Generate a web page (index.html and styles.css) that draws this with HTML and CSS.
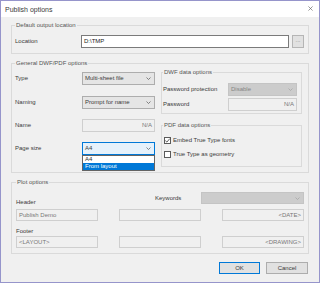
FILE: index.html
```html
<!DOCTYPE html>
<html>
<head>
  <meta charset="utf-8">
  <meta name="viewport" content="width=device-width">
  <title>Publish options</title>
<link rel="stylesheet" href="styles.css">
</head>
<body>
  <div class="window">
    <div class="titlebar">
      <span class="title">Publish options</span>
      <svg class="close" viewBox="0 0 6 6"><path d="M0.5 0.5 L5.5 5.5 M5.5 0.5 L0.5 5.5"/></svg>
    </div>

    <div class="content">
      <fieldset class="group g-output">
        <legend>Default output location</legend>
        <div class="row">
          <label class="lbl lbl-loc">Location</label>
          <div class="field path">D:\TMP</div>
          <div class="browse">...</div>
        </div>
      </fieldset>

      <fieldset class="group g-general">
        <legend>General DWF/PDF options</legend>
        <div class="general-cols">
          <div class="col-left">
            <div class="row r-type">
              <label class="lbl lbl-gen">Type</label>
              <div class="combo"><span>Multi-sheet file</span><svg class="chev" viewBox="0 0 5 3"><path d="M0.5 0.5 L2.5 2.5 L4.5 0.5"/></svg></div>
            </div>
            <div class="row r-naming">
              <label class="lbl lbl-gen">Naming</label>
              <div class="combo"><span>Prompt for name</span><svg class="chev" viewBox="0 0 5 3"><path d="M0.5 0.5 L2.5 2.5 L4.5 0.5"/></svg></div>
            </div>
            <div class="row r-name">
              <label class="lbl lbl-gen">Name</label>
              <div class="field readonly right gen-field">N/A</div>
            </div>
            <div class="row r-page">
              <label class="lbl lbl-gen">Page size</label>
              <div class="combo focused">
                <span>A4</span><svg class="chev" viewBox="0 0 5 3"><path d="M0.5 0.5 L2.5 2.5 L4.5 0.5"/></svg>
                <ul class="droplist">
                  <li>A4</li>
                  <li class="selected">From layout</li>
                </ul>
              </div>
            </div>
          </div>

          <div class="col-right">
            <fieldset class="group sub dwf">
              <legend>DWF data options</legend>
              <div class="row">
                <label class="lbl lbl-dwf">Password protection</label>
                <div class="combo disabled dwf-field"><span>Disable</span><svg class="chev" viewBox="0 0 5 3"><path d="M0.5 0.5 L2.5 2.5 L4.5 0.5"/></svg></div>
              </div>
              <div class="row r-pass">
                <label class="lbl lbl-dwf">Password</label>
                <div class="field readonly right dwf-field">N/A</div>
              </div>
            </fieldset>

            <fieldset class="group sub pdf">
              <legend>PDF data options</legend>
              <div class="check-row">
                <span class="checkbox"><svg viewBox="0 0 7 7"><path d="M1.3 3.6 L2.9 5.1 L5.8 1.6"/></svg></span>
                <span>Embed True Type fonts</span>
              </div>
              <div class="check-row r-geom">
                <span class="checkbox"></span>
                <span>True Type as geometry</span>
              </div>
            </fieldset>
          </div>
        </div>
      </fieldset>

      <fieldset class="group g-plot">
        <legend>Plot options</legend>
        <div class="plot-head">
          <label class="lbl plot-lbl">Header</label>
          <label class="lbl kw-lbl">Keywords</label>
          <div class="combo disabled kw-combo"><span></span><svg class="chev" viewBox="0 0 5 3"><path d="M0.5 0.5 L2.5 2.5 L4.5 0.5"/></svg></div>
        </div>
        <div class="plot-row r-header">
          <div class="field readonly">Publish Demo</div>
          <div class="field readonly"></div>
          <div class="field readonly right">&lt;DATE&gt;</div>
        </div>
        <label class="lbl plot-lbl footer-lbl">Footer</label>
        <div class="plot-row r-footer">
          <div class="field readonly">&lt;LAYOUT&gt;</div>
          <div class="field readonly"></div>
          <div class="field readonly right">&lt;DRAWING&gt;</div>
        </div>
      </fieldset>

      <div class="buttons">
        <div class="button default">OK</div>
        <div class="button cancel">Cancel</div>
      </div>
    </div>
  </div>
</body>
</html>
```

FILE: styles.css
```css
* {
  box-sizing: border-box;
}

body {
  margin: 0;
  background: #ffffff;
  font-family: "Liberation Sans", Arial, sans-serif;
  font-size: 6px;
  line-height: 7px;
  color: #3a3a3a;
}

.window {
  width: 320px;
  height: 283px;
  border: 1px solid #9695cb;
  background: #f0f0f0;
  overflow: hidden;
}

.titlebar {
  height: 16px;
  background: #ffffff;
  display: flex;
  align-items: center;
  justify-content: space-between;
  padding: 0 6px 0 4px;
}

.title {
  font-size: 7px;
  color: #3a3a3a;
}

.close {
  width: 5px;
  height: 5px;
  margin-top: -2px;
  stroke: #666666;
  stroke-width: 0.8;
  fill: none;
}

.content {
  padding: 0 10px;
}

/* group boxes */
fieldset.group {
  margin: 0;
  min-width: 0;
  border: 1px solid #dadada;
}

legend {
  padding: 0 1px;
  line-height: 7px;
  color: #555555;
}

.row {
  display: flex;
  align-items: center;
  height: 13px;
}

.lbl {
  color: #3a3a3a;
  white-space: nowrap;
}

/* generic edit box */
.field {
  height: 13px;
  border: 1px solid #7a7a7a;
  background: #ffffff;
  padding: 0 2px;
  line-height: 11px;
  white-space: nowrap;
  overflow: hidden;
}

.field.readonly {
  border-color: #cfcfcf;
  background: #f0f0f0;
  color: #777777;
}

.field.right {
  text-align: right;
}

/* combo box */
.combo {
  position: relative;
  height: 13px;
  width: 73px;
  display: flex;
  align-items: center;
  justify-content: space-between;
  padding: 0 3px 0 2px;
  border: 1px solid #adadad;
  background: #e5e5e5;
  white-space: nowrap;
}

.chev {
  width: 5px;
  height: 3px;
  fill: none;
  stroke: #555555;
  stroke-width: 0.7;
}

.combo.focused {
  border-color: #0078d7;
  background: #e5f1fb;
}

.combo.disabled {
  border-color: #c4c4c4;
  background: #cccccc;
  color: #858585;
}

.combo.disabled .chev {
  stroke: #a0a0a0;
}

.droplist {
  position: absolute;
  top: 12px;
  left: -1px;
  width: 73px;
  margin: 0;
  padding: 0;
  list-style: none;
  border: 1px solid #646464;
  background: #ffffff;
  color: #333333;
}

.droplist li {
  height: 7px;
  line-height: 7px;
  padding-left: 2px;
}

.droplist li.selected {
  background: #0078d7;
  color: #ffffff;
}

/* default output location */
.g-output {
  margin-top: 5px !important;
  padding: 6px 4px 5px 3px;
}

.lbl-loc {
  width: 66px;
}

.path {
  width: 208px;
  color: #222222;
}

.browse {
  width: 12px;
  height: 13px;
  margin-left: 3px;
  border: 1px solid #b5b5b5;
  background: #e1e1e1;
  color: #8a8a8a;
  text-align: center;
  line-height: 9px;
}

/* general options */
.g-general {
  margin-top: 6px !important;
  padding: 0 6px 5px 3px;
}

.general-cols {
  display: grid;
  grid-template-columns: 140px 141px;
  column-gap: 6px;
  align-items: start;
}

.col-left {
  padding-top: 5px;
}

.lbl-gen {
  width: 67px;
}

.gen-field {
  width: 73px;
}

.r-naming {
  margin-top: 11px;
}

.r-name,
.r-page {
  margin-top: 10px;
}

.col-right {
  padding-top: 2px;
}

.dwf {
  padding: 7px 4px 2px 1px;
}

.lbl-dwf {
  width: 65px;
}

.dwf-field {
  width: 69px;
}

.r-pass {
  margin-top: 2px;
}

.pdf {
  margin-top: 8px !important;
  padding: 7px 4px 7px 1px;
}

.check-row {
  display: flex;
  align-items: center;
  height: 9px;
  padding-left: 1px;
}

.r-geom {
  margin-top: 5px;
}

.checkbox {
  width: 7px;
  height: 7px;
  margin-right: 2px;
  border: 1px solid #5a5a5a;
  background: #ffffff;
}

.checkbox svg {
  display: block;
  width: 7px;
  height: 7px;
  margin: -1px;
  fill: none;
  stroke: #333333;
  stroke-width: 0.8;
}

/* plot options */
.g-plot {
  margin-top: 6px !important;
  padding: 6px 4px 5px 4px;
}

.plot-head {
  display: flex;
  align-items: flex-start;
  height: 14px;
}

.plot-lbl {
  display: block;
}

.plot-head .plot-lbl {
  margin-top: 7px;
  width: 139px;
}

.kw-lbl {
  line-height: 12px;
  width: 46px;
}

.kw-combo {
  width: 103px;
  height: 12px;
}

.plot-row {
  display: grid;
  grid-template-columns: 82px 82px 82px;
  column-gap: 21px;
}

.plot-row .field {
  height: 12px;
  line-height: 10px;
}

.r-header {
  margin-top: 3px;
}

.footer-lbl {
  margin-top: 7px;
}

.r-footer {
  margin-top: 1px;
}

/* dialog buttons */
.buttons {
  display: flex;
  justify-content: flex-end;
  gap: 6px;
  margin-top: 8px;
  padding-right: 1px;
}

.button {
  height: 12px;
  line-height: 10px;
  text-align: center;
  border: 1px solid #adadad;
  background: #e1e1e1;
  color: #3a3a3a;
}

.button.default {
  width: 41px;
  border-color: #0078d7;
}

.button.cancel {
  width: 42px;
}
```
